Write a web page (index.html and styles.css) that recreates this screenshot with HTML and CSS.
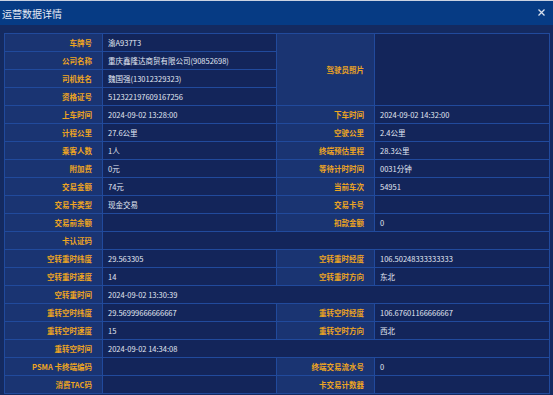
FILE: index.html
```html
<!DOCTYPE html>
<html lang="zh-CN">
<head>
    <meta charset="UTF-8">
    <title>运营数据详情</title>
    <link rel="stylesheet" href="styles.css">
</head>
<body>
    <header class="dialog-head">
        <h1>运营数据详情</h1>
        <span class="close">
            <svg width="7" height="7" viewBox="0 0 7 7"><path d="M0.5 0.5L6.5 6.5M6.5 0.5L0.5 6.5" stroke="#d8e0ee" stroke-width="1.3"/></svg>
        </span>
    </header>
    <main class="dialog-body">
        <table class="detail">
            <colgroup>
                <col class="c-label"><col class="c-value"><col class="c-label"><col class="c-value2">
            </colgroup>
            <tr><th>车牌号</th><td>渝A937T3</td><th rowspan="4">驾驶员照片</th><td rowspan="4"></td></tr>
            <tr><th>公司名称</th><td>重庆鑫隆达商贸有限公司(90852698)</td></tr>
            <tr><th>司机姓名</th><td>魏国强(13012329323)</td></tr>
            <tr><th>资格证号</th><td>512322197609167256</td></tr>
            <tr><th>上车时间</th><td>2024-09-02 13:28:00</td><th>下车时间</th><td>2024-09-02 14:32:00</td></tr>
            <tr><th>计程公里</th><td>27.6公里</td><th>空驶公里</th><td>2.4公里</td></tr>
            <tr><th>乘客人数</th><td>1人</td><th>终端预估里程</th><td>28.3公里</td></tr>
            <tr><th>附加费</th><td>0元</td><th>等待计时时间</th><td>0031分钟</td></tr>
            <tr><th>交易金额</th><td>74元</td><th>当前车次</th><td>54951</td></tr>
            <tr><th>交易卡类型</th><td>现金交易</td><th>交易卡号</th><td></td></tr>
            <tr><th>交易前余额</th><td></td><th>扣款金额</th><td>0</td></tr>
            <tr><th>卡认证码</th><td colspan="3"></td></tr>
            <tr><th>空转重时纬度</th><td>29.563305</td><th>空转重时经度</th><td>106.50248333333333</td></tr>
            <tr><th>空转重时速度</th><td>14</td><th>空转重时方向</th><td>东北</td></tr>
            <tr><th>空转重时间</th><td colspan="3">2024-09-02 13:30:39</td></tr>
            <tr><th>重转空时纬度</th><td>29.56999666666667</td><th>重转空时经度</th><td>106.67601166666667</td></tr>
            <tr><th>重转空时速度</th><td>15</td><th>重转空时方向</th><td>西北</td></tr>
            <tr><th>重转空时间</th><td colspan="3">2024-09-02 14:34:08</td></tr>
            <tr><th>PSMA 卡终端编码</th><td></td><th>终端交易流水号</th><td>0</td></tr>
            <tr><th>消费TAC码</th><td></td><th>卡交易计数器</th><td></td></tr>
        </table>
    </main>
</body>
</html>
```

FILE: styles.css
```css
body {
    margin: 0;
    background-color: #142a60;
    font-family: "Noto Sans CJK SC", "Noto Sans", sans-serif;
    overflow: hidden;
}
.dialog-head {
    display: flex;
    align-items: center;
    justify-content: space-between;
    height: 24px;
    border-top: 1px solid #c9d2e2;
    background-color: #063b84;
    padding: 0 8px 0 2px;
}
.dialog-head h1 {
    margin: 0;
    font-size: 10px;
    font-weight: normal;
    color: #e4eaf4;
}
.close {
    display: flex;
    margin-top: -1px;
}
.dialog-body {
    padding: 8px 4px 0;
}
.detail {
    width: 545px;
    table-layout: fixed;
    border-collapse: collapse;
    border: 1px solid #2654a8;
    font-size: 7.5px;
}
.c-label { width: 98px; }
.c-value { width: 174px; }
.c-value2 { width: 175px; }
.detail tr {
    height: 18px;
}
.detail th, .detail td {
    border: 1px solid #214a9c;
    padding: 0;
    white-space: nowrap;
    overflow: hidden;
}
.detail th {
    background-color: #1a3472;
    color: #eea522;
    font-weight: bold;
    text-align: right;
    padding-right: 10px;
}
.detail td {
    background-color: #13255a;
    color: #e2e8f2;
    text-align: left;
    padding-left: 5px;
}
```
